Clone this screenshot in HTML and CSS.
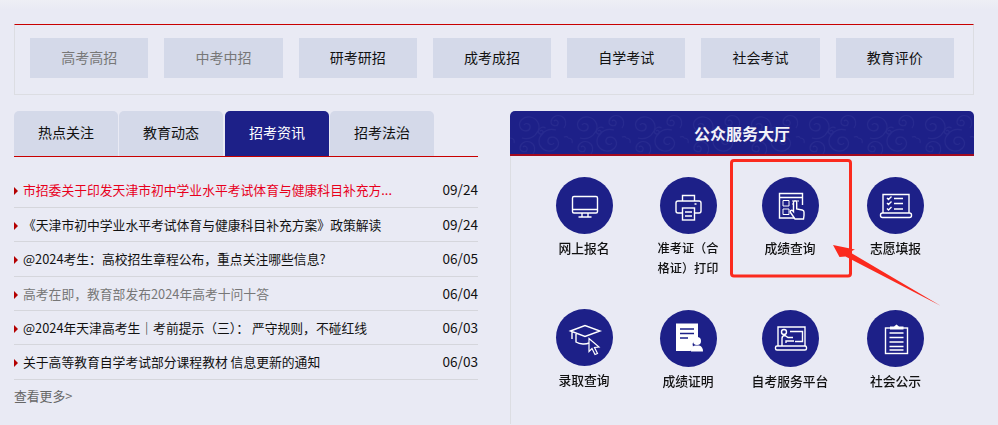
FILE: index.html
```html
<!DOCTYPE html>
<html lang="zh-CN">
<head>
<meta charset="utf-8">
<title>公众服务大厅</title>
<link rel="stylesheet" href="styles.css">
</head>
<body>
<div class="page">
  <nav class="category-panel">
    <a class="category is-muted">高考高招</a>
    <a class="category is-muted">中考中招</a>
    <a class="category">研考研招</a>
    <a class="category">成考成招</a>
    <a class="category">自学考试</a>
    <a class="category">社会考试</a>
    <a class="category">教育评价</a>
  </nav>
  <div class="columns">
    <section class="news">
      <div class="tabs">
        <a class="tab">热点关注</a>
        <a class="tab">教育动态</a>
        <a class="tab is-active">招考资讯</a>
        <a class="tab">招考法治</a>
      </div>
      <ul class="news-list">
        <li class="news-row is-red"><span class="news-title">市招委关于印发天津市初中学业水平考试体育与健康科目补充方...</span><span class="news-date">09/24</span></li>
        <li class="news-row"><span class="news-title">《天津市初中学业水平考试体育与健康科目补充方案》政策解读</span><span class="news-date">09/24</span></li>
        <li class="news-row"><span class="news-title">@2024考生：高校招生章程公布，重点关注哪些信息?</span><span class="news-date">06/05</span></li>
        <li class="news-row is-visited"><span class="news-title">高考在即，教育部发布2024年高考十问十答</span><span class="news-date">06/04</span></li>
        <li class="news-row"><span class="news-title">@2024年天津高考生｜考前提示（三）： 严守规则，不碰红线</span><span class="news-date">06/03</span></li>
        <li class="news-row"><span class="news-title">关于高等教育自学考试部分课程教材 信息更新的通知</span><span class="news-date">06/03</span></li>
      </ul>
      <a class="more">查看更多&gt;</a>
    </section>
    <section class="services">
      <header class="services-head">
        <svg class="swirls" aria-hidden="true">
          <defs>
            <pattern id="swirl" width="58" height="44" patternUnits="userSpaceOnUse">
              <path d="M14 14c2-3 7-1 6 3s-8 4-10-1 3-11 10-10 11 8 8 14-9 9-16 7" />
              <path d="M44 32c-2 3-7 1-6-3s8-4 10 1-3 11-10 10-11-8-8-14 9-9 16-7" />
              <path d="M44 10c2-2 5 0 4 3s-7 2-7-2 5-8 10-6 6 8 3 12" />
              <path d="M13 36c2-2 5 0 4 3s-7 2-7-2 5-8 10-6 6 8 3 12" />
              <path d="M30 20c1.500-1.500 4 0 3 2s-5 1-4.500-2 4-5 7-3" />
              <path d="M0 27c3 0 5 2 4 5M54 26c3-1 4 0 4 1" />
            </pattern>
          </defs>
          <rect width="100%" height="100%" fill="url(#swirl)" />
        </svg>
        <h2 class="services-title">公众服务大厅</h2>
      </header>
      <div class="service-grid">
        <a class="service">
          <span class="disc">
            <svg viewBox="0 0 57 57"><rect x="16.500" y="19.500" width="25" height="16.500" rx="1.500"/><path d="M17 32.500h24M26 36v3.500M32 36v3.500M22.500 40h13" /></svg>
          </span>
          <span class="service-label">网上报名</span>
        </a>
        <a class="service">
          <span class="disc">
            <svg viewBox="0 0 57 57"><path d="M22.500 24v-5.500h12V24M22 36h-4a2 2 0 0 1-2-2v-8a2 2 0 0 1 2-2h21a2 2 0 0 1 2 2v8a2 2 0 0 1-2 2h-4"/><rect x="22.500" y="31" width="12" height="12"/><path d="M25 35h7M25 39h7M34.500 27h2"/></svg>
          </span>
          <span class="service-label is-tight">准考证（合格证）打印</span>
        </a>
        <a class="service">
          <span class="disc">
            <svg viewBox="0 0 57 57"><path d="M33 41H17.500V16.500h23V28M17.500 20.500h23"/><path d="M21 23.500h6v5.500h-6zM21 32h6v5.500h-6zM30 24h7M30 27h2" class="thin"/><path class="solid" d="M31.500 25.500a1.600 1.600 0 0 1 3.200 0v6.500l5.500 1c1.200 .3 1.800 1 1.800 2v3.500l-.5 3.500h-8.500l-4.500-6.500c-1-1.500 1-3 2.200-1.700l.8 .9z"/></svg>
          </span>
          <span class="service-label">成绩查询</span>
        </a>
        <a class="service">
          <span class="disc">
            <svg viewBox="0 0 57 57"><path d="M16 36V17.500h26V36"/><rect x="13.500" y="36" width="31" height="4.500" rx="2"/><path d="M20 21l1.500 1.500 3-3M20 26l1.500 1.500 3-3M20 31.500l1.500 1.500 3-3M27 21.500h9M27 26.500h9M27 32h9"/></svg>
          </span>
          <span class="service-label">志愿填报</span>
        </a>
        <a class="service is-raised">
          <span class="disc">
            <svg viewBox="0 0 57 57"><path d="M14.500 22L29 16.500 44 22l-15 5.500zM20 25v8c4 2.500 10 2.500 13 1M16 23v7"/><path class="outlined" d="M33 29.500l10 8.500-4.500 .5 3 6-2.500 1-3-6-3 3z"/></svg>
          </span>
          <span class="service-label">录取查询</span>
        </a>
        <a class="service">
          <span class="disc">
            <svg viewBox="0 0 57 57"><path class="fill" d="M16 13.500h22v15a6 6 0 0 0-5 8c0 2-1 3-2.500 4.500H16z"/><path class="cut" d="M20 19h14M20 23.500h14M20 28h8"/><circle class="fill" cx="37" cy="31" r="4"/><path class="fill" d="M31 41.500c0-4 2-5.500 4-6h4c2 .5 4 2 4 6z"/></svg>
          </span>
          <span class="service-label">成绩证明</span>
        </a>
        <a class="service">
          <span class="disc">
            <svg viewBox="0 0 57 57"><path d="M16 36V17h27v19"/><rect x="13.500" y="36" width="31" height="4" rx="1.500"/><circle cx="22" cy="22" r="2.500"/><path d="M20 36v-7.500c0-2 1-3 3-3l3 2h5M24 33v-2h8M28 21.500h12.500v10H33"/></svg>
          </span>
          <span class="service-label">自考服务平台</span>
        </a>
        <a class="service">
          <span class="disc">
            <svg viewBox="0 0 57 57"><rect x="18.500" y="18" width="22" height="25.500"/><path class="fill" d="M23 19.500v-3h4l2.500-2 2.500 2h4.500v3z"/><path d="M22.500 23h14M22.500 27.500h14M22.500 32h14M22.500 36.500h14M22.500 40h14"/></svg>
          </span>
          <span class="service-label">社会公示</span>
        </a>
      </div>
    </section>
  </div>
  <svg class="callout" viewBox="0 0 998 425" aria-hidden="true">
    <rect class="callout-box" x="731.500" y="160.500" width="119" height="115.500" rx="2.500"/>
    <path class="callout-arrow" d="M833 245L855 249.500 849.500 252 941 306 845.500 256.500 839.500 257z"/>
  </svg>
</div>
</body>
</html>
```

FILE: styles.css
```css
* {
  box-sizing: border-box;
}

html,
body {
  margin: 0;
  background: #e9eaf4;
}

body {
  font-family: "Noto Sans CJK SC", "Noto Sans", sans-serif;
  color: #111;
}

.page {
  position: relative;
  height: 425px;
  padding: 24px 24px 0 14px;
  background: linear-gradient(#eeeff5, #e9eaf4 9px);
  overflow: hidden;
}

a {
  color: inherit;
  text-decoration: none;
}

/* Category strip */
.category-panel {
  display: flex;
  gap: 16px;
  height: 71px;
  padding: 13px 19px 0 15px;
  border: 1px solid #dcdde2;
  border-top: 1px solid #c80000;
}

.category {
  flex: 1;
  height: 40px;
  font-size: 14px;
  line-height: 39px;
  text-align: center;
  background: #d4d9e9;
}

.category.is-muted {
  color: #777;
}

/* Two columns */
.columns {
  display: grid;
  grid-template-columns: 464px 464px;
  gap: 32px;
  margin-top: 16px;
}

/* News */
.tabs {
  display: flex;
  gap: 1px;
  height: 46px;
  border-bottom: 1px solid #c80000;
}

.tab {
  width: 104px;
  height: 45px;
  font-size: 14px;
  line-height: 43px;
  text-align: center;
  background: #d4d9e9;
  border-radius: 5px 5px 0 0;
}

.tab.is-active {
  margin-left: 1px;
  color: #fff;
  background: #1d2088;
}

.news-list {
  margin: 16.4px 0 0;
  padding: 0;
  list-style: none;
}

.news-row {
  display: flex;
  justify-content: space-between;
  height: 34.4px;
  padding-left: 9px;
  font-size: 12.8px;
  line-height: 33px;
  border-bottom: 1px solid #d5d6dc;
  position: relative;
}

.news-row::before {
  content: "";
  position: absolute;
  left: 0;
  top: 14px;
  border-left: 4px solid #b40000;
  border-top: 4px solid transparent;
  border-bottom: 4px solid transparent;
}

.news-row.is-red .news-title {
  color: #e8001c;
}

.news-row.is-visited .news-title {
  color: #777;
}

.news-date {
  font-size: 13.6px;
}

.more {
  display: block;
  margin-top: 6.6px;
  font-size: 12.8px;
  line-height: 20px;
  color: #666;
}

/* Services */
.services {
  display: flex;
  flex-direction: column;
}

.services-head {
  position: relative;
  height: 45px;
  background: #1d2088;
  border-bottom: 2px solid #a30b1f;
  border-radius: 5px 5px 0 0;
  overflow: hidden;
}

.swirls {
  position: absolute;
  inset: 0;
  width: 100%;
  height: 100%;
}

.swirls path {
  fill: none;
  stroke: #272a8f;
  stroke-width: 1.1;
}

.services-title {
  position: relative;
  margin: 0;
  font-size: 16px;
  font-weight: 700;
  line-height: 44px;
  text-align: center;
  color: #f2f2f8;
}

.service-grid {
  display: grid;
  grid-template-columns: 104px 104px 100px 111px;
  grid-template-rows: 133px auto;
  justify-content: start;
  padding: 21px 0 33px 21px;
  border-left: 1px solid #dcdde2;
  filter: blur(0.3px);
}

.service {
  display: flex;
  flex-direction: column;
  align-items: center;
}

.service.is-raised {
  margin-top: -1px;
}

.disc {
  display: block;
  width: 57px;
  height: 57px;
  border-radius: 50%;
  background: #1d2088;
}

.disc svg {
  display: block;
  width: 57px;
  height: 57px;
  fill: none;
  stroke: #fff;
  stroke-width: 1.4;
}

.disc .thin {
  stroke-width: 1;
}

.disc .solid {
  fill: #1d2088;
}

.disc .outlined {
  fill: #1d2088;
  stroke-width: 1.2;
}

.disc .fill {
  fill: #fff;
  stroke: none;
}

.disc .cut {
  stroke: #1d2088;
  stroke-width: 1.6;
}

.service-label {
  width: 64px;
  margin-top: 4px;
  font-size: 12.8px;
  font-weight: 500;
  line-height: 20px;
  text-align: center;
  color: #111;
}

.service-label.is-tight {
  font-size: 12.2px;
}

.service:nth-child(7) .service-label {
  width: 80px;
}

/* Red annotation drawn over the screenshot */
.callout {
  position: absolute;
  left: 0;
  top: 0;
  width: 998px;
  height: 425px;
  pointer-events: none;
}

.callout-box {
  fill: none;
  stroke: #fb2a1e;
  stroke-width: 3;
}

.callout-arrow {
  fill: #fb2a1e;
}
```
